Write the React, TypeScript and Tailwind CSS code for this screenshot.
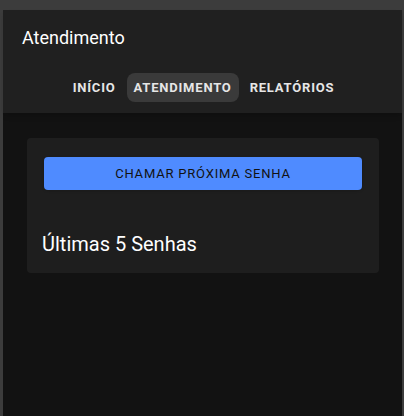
export default function App() {
  const tabs = ['INÍCIO', 'ATENDIMENTO', 'RELATÓRIOS'];
  const active = 'ATENDIMENTO';

  return (
    <div className="h-[416px] w-[404px] bg-[#3c3c3c] pl-[3px] pt-[10px] pr-[2px] font-['Roboto',sans-serif]">
      <div className="flex h-full flex-col bg-[#121212]">
        {/* Header */}
        <header className="bg-[#202020] shadow-md">
          <div className="px-[19px] pt-[16px] text-[18px] leading-[24px] text-white">Atendimento</div>
          <nav className="flex items-center justify-center gap-[5px] pt-[23px] pb-[11px] pl-[2px]">
            {tabs.map((t) => (
              <button
                key={t}
                className={`rounded-[8px] py-[6px] text-[13px] font-bold leading-[17px] tracking-[0.8px] text-[#e6e6e6] ${
                  t === active ? 'bg-[#3a3a3a] px-[7px]' : 'px-[6px]'
                }`}
              >
                {t}
              </button>
            ))}
          </nav>
        </header>

        {/* Content */}
        <main className="px-[24px] pt-[25px] pr-[23px]">
          <div className="rounded-[4px] bg-[#1e1e1e] px-[17px] pt-[19px] pb-[15px]">
            <button className="h-[33px] w-full rounded-[4px] bg-[#4f8bff] text-[13px] leading-[33px] tracking-[0.8px] text-[#121212] shadow-sm">
              CHAMAR PRÓXIMA SENHA
            </button>
            <h2 className="mt-[40px] -ml-[2px] text-[20px] leading-[28px] text-white">Últimas 5 Senhas</h2>
          </div>
        </main>
      </div>
    </div>
  );
}
